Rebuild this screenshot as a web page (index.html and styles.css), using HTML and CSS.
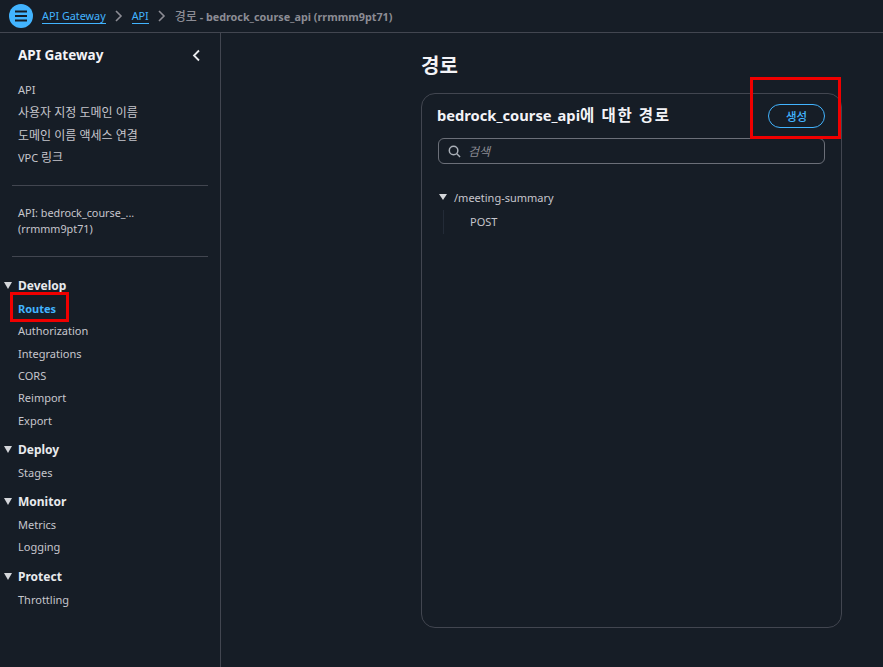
FILE: index.html
```html
<!DOCTYPE html>
<html lang="ko">
<head>
<meta charset="utf-8">
<title>경로</title>
<link rel="stylesheet" href="styles.css">
</head>
<body>
<header class="topbar">
  <button class="menu-btn" aria-label="menu">
    <svg width="14" height="12" viewBox="0 0 14 12"><path d="M1 1.5h12M1 6h12M1 10.5h12" stroke="#161d26" stroke-width="2" fill="none"/></svg>
  </button>
  <nav class="crumbs">
    <a class="crumb-link">API Gateway</a>
    <svg class="chev" width="8" height="12" viewBox="0 0 8 12"><path d="M1 1l5 5-5 5" stroke="#8c8c94" stroke-width="1.6" fill="none"/></svg>
    <a class="crumb-link">API</a>
    <svg class="chev" width="8" height="12" viewBox="0 0 8 12"><path d="M1 1l5 5-5 5" stroke="#8c8c94" stroke-width="1.6" fill="none"/></svg>
    <span class="crumb-current"><span class="crumb-ko">경로</span> - bedrock_course_api (rrmmm9pt71)</span>
  </nav>
</header>
<div class="shell">
  <aside class="sidebar">
    <div class="side-head">
      <span class="side-title">API Gateway</span>
      <svg width="9" height="13" viewBox="0 0 9 13"><path d="M7 1.5L2 6.5l5 5" stroke="#e8eaed" stroke-width="1.8" fill="none"/></svg>
    </div>
    <ul class="nav-list top-list">
      <li>API</li>
      <li class="ko">사용자 지정 도메인 이름</li>
      <li class="ko">도메인 이름 액세스 연결</li>
      <li>VPC <span class="ko">링크</span></li>
    </ul>
    <hr class="divider first-divider">
    <div class="api-name">API: bedrock_course_...<br>(rrmmm9pt71)</div>
    <hr class="divider second-divider">
    <section class="group develop">
      <h3 class="group-title"><i class="tri"></i>Develop</h3>
      <ul class="nav-list develop-list">
        <li class="active">Routes</li>
        <li>Authorization</li>
        <li>Integrations</li>
        <li>CORS</li>
        <li>Reimport</li>
        <li>Export</li>
      </ul>
    </section>
    <section class="group">
      <h3 class="group-title"><i class="tri"></i>Deploy</h3>
      <ul class="nav-list"><li>Stages</li></ul>
    </section>
    <section class="group">
      <h3 class="group-title"><i class="tri"></i>Monitor</h3>
      <ul class="nav-list"><li>Metrics</li><li>Logging</li></ul>
    </section>
    <section class="group">
      <h3 class="group-title"><i class="tri"></i>Protect</h3>
      <ul class="nav-list"><li>Throttling</li></ul>
    </section>
  </aside>
  <main class="main">
    <h1 class="page-title">경로</h1>
    <section class="card">
      <div class="card-head">
        <h2 class="card-title">bedrock_course_api<span class="card-ko">에 대한 경로</span></h2>
        <button class="create-btn">생성</button>
      </div>
      <div class="search">
        <svg width="13" height="13" viewBox="0 0 14 14"><circle cx="6" cy="6" r="4.6" stroke="#aab0b8" stroke-width="1.6" fill="none"/><path d="M9.5 9.5L13 13" stroke="#aab0b8" stroke-width="1.6"/></svg>
        <span class="search-text">검색</span>
      </div>
      <div class="tree">
        <div class="tree-row"><i class="tri small"></i>/meeting-summary</div>
        <div class="tree-child">POST</div>
      </div>
    </section>
  </main>
</div>
<div class="mark mark-routes"></div>
<div class="mark mark-create"></div>
</body>
</html>
```

FILE: styles.css
```css
* { box-sizing: border-box; }
html, body { height: 100%; }
body {
  margin: 0;
  background: #161d26;
  color: #c6c6cd;
  font-family: "Noto Sans", "Noto Sans CJK KR", sans-serif;
  font-size: 11px;
  overflow: hidden;
}
.ko { font-size: 12px; }
.topbar {
  height: 33px;
  border-bottom: 1px solid #424650;
  display: flex;
  align-items: center;
  padding-left: 9px;
  gap: 9px;
  padding-bottom: 1px;
}
.menu-btn {
  width: 24px;
  height: 24px;
  border: 0;
  padding: 0;
  border-radius: 50%;
  background: #42b4ff;
  display: flex;
  align-items: center;
  justify-content: center;
}
.crumbs { display: flex; align-items: center; gap: 9px; font-size: 10.8px; }
.crumb-link { color: #42b4ff; border-bottom: 1px solid #42b4ff; line-height: 15px; }
.crumb-current { color: #8c8c94; font-weight: 700; }
.crumb-ko { font-size: 12px; font-weight: 500; }
.shell { display: flex; height: 634px; }
.sidebar {
  width: 221px;
  border-right: 1px solid #424650;
  padding: 12px 12px 0 0;
  flex: none;
}
.side-head {
  display: flex;
  justify-content: space-between;
  align-items: center;
  padding: 0 7px 0 18px;
  height: 20px;
}
.side-title { color: #f3f3f7; font-size: 13.5px; font-weight: 700; }
.nav-list { list-style: none; margin: 0; padding: 0 0 0 18px; }
.nav-list li { height: 22.4px; line-height: 22px; white-space: nowrap; }
.top-list { margin-top: 14px; }
.top-list li { height: 22.8px; }
.divider { border: 0; border-top: 1px solid #424650; margin: 0 0 0 12px; }
.first-divider { margin-top: 15px; }
.api-name { padding-left: 18px; margin-top: 19px; line-height: 16px; font-size: 10.8px; }
.second-divider { margin-top: 19px; }
.group { margin-top: 8px; }
.develop { margin-top: 19px; }
.develop-list { margin-top: -0.4px; margin-bottom: -0.6px; }
.group-title {
  margin: 0;
  color: #e8eaed;
  font-size: 12px;
  font-weight: 700;
  height: 22px;
  line-height: 20px;
  padding-left: 18px;
  position: relative;
}
.tri {
  display: inline-block;
  width: 0;
  height: 0;
  border-left: 4.5px solid transparent;
  border-right: 4.5px solid transparent;
  border-top: 7px solid #d4d6da;
  position: absolute;
  left: 4px;
  top: 6px;
}
.active { color: #42b4ff; font-weight: 700; }
.main { flex: 1; padding: 18px 41px 39px 200px; display: flex; flex-direction: column; }
.page-title { margin: 1px 0 13px; color: #f3f3f7; font-size: 20px; font-weight: 700; line-height: 28px; }
.card {
  flex: 1;
  border: 1px solid #424650;
  border-radius: 14px;
  padding: 10px 16px;
}
.card-head { display: flex; justify-content: space-between; align-items: center; height: 24px; }
.card-title { margin: -2px 0 0 -1px; color: #f3f3f7; font-size: 14.7px; font-weight: 700; line-height: 24px; }
.card-ko { font-size: 15.5px; letter-spacing: 1.6px; }
.create-btn {
  width: 57px;
  height: 24px;
  border: 1px solid #42b4ff;
  border-radius: 12px;
  background: transparent;
  color: #42b4ff;
  font: 500 11.5px "Noto Sans CJK KR", sans-serif;
  padding: 0;
}
.search {
  margin-top: 10px;
  height: 26px;
  border: 1px solid #6b6f78;
  border-radius: 6px;
  display: flex;
  align-items: center;
  padding-left: 9px;
  gap: 7px;
}
.search-text { color: #8c8c94; font-style: italic; font-size: 12px; }
.tree { margin-top: 24px; }
.tree-row { position: relative; padding-left: 16px; height: 20px; line-height: 20px; }
.tri.small { border-left-width: 4px; border-right-width: 4px; border-top-width: 6px; left: 1px; top: 6px; }
.tree-child {
  margin: 2px 0 0 5px;
  border-left: 1px solid #232b37;
  padding-left: 26px;
  height: 24px;
  line-height: 24px;
}
.mark { position: absolute; border: 3px solid #f00000; }
.mark-routes { left: 10px; top: 292px; width: 59px; height: 30px; }
.mark-create { left: 750px; top: 77px; width: 91px; height: 62px; }
```
